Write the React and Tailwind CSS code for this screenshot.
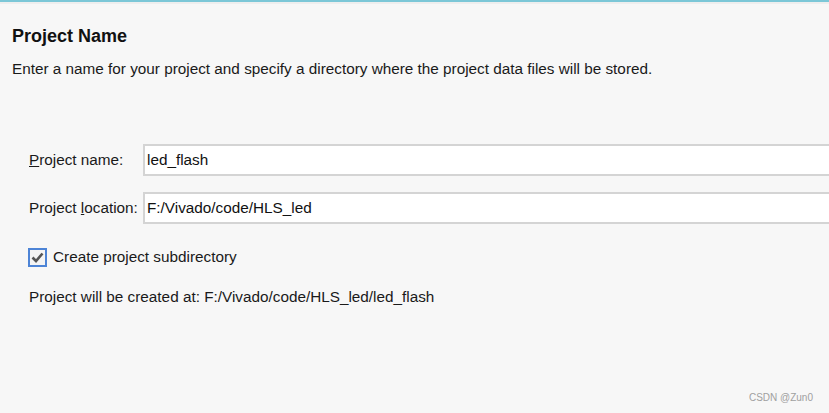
export default function App() {
  return (
    <div className="w-[829px] h-[413px] bg-[#f7f7f7] overflow-hidden relative" style={{ fontFamily: '"Liberation Sans", Arial, sans-serif' }}>
      <div className="h-[2px] bg-[#7cc7d7]" />
      <div className="h-[2px] bg-[#eeeeee]" />
      <div className="pl-[12px]">
        <div className="pt-[21px] text-[18px] font-bold text-[#111] leading-[22px]">Project Name</div>
        <div className="mt-[13px] text-[15.3px] text-[#1a1a1a] leading-[18px]">Enter a name for your project and specify a directory where the project data files will be stored.</div>
      </div>
      <div className="pl-[29px] mt-[66px]">
        <div className="flex items-center h-[32px]">
          <div className="w-[114px] text-[15.3px] text-[#1a1a1a]"><span className="underline">P</span>roject name:</div>
          <div className="flex-1 h-[32px] bg-white border-2 border-r-0 border-[#d4d4d4] flex items-center pl-[2px] text-[15.3px] text-[#111]">led_flash</div>
        </div>
        <div className="flex items-center h-[32px] mt-[16px]">
          <div className="w-[114px] text-[15.3px] text-[#1a1a1a]">Project <span className="underline">l</span>ocation:</div>
          <div className="flex-1 h-[32px] bg-white border-2 border-r-0 border-[#d4d4d4] flex items-center pl-[2px] text-[15.3px] text-[#111]">F:/Vivado/code/HLS_led</div>
        </div>
        <div className="flex items-center mt-[22px] -ml-[1px]">
          <div className="w-[19px] h-[19px] border-2 border-[#4d84d6] bg-[#f4f4f4] flex items-center justify-center">
            <svg width="13" height="11" viewBox="0 0 13 11"><path d="M1.5 5.5 L5 9 L11.5 1.5" fill="none" stroke="#555" strokeWidth="2.6" /></svg>
          </div>
          <span className="ml-[6px] text-[15.3px] text-[#1a1a1a]">Create project subdirectory</span>
        </div>
        <div className="mt-[17px] text-[15.3px] text-[#1a1a1a]">Project will be created at: F:/Vivado/code/HLS_led/led_flash</div>
      </div>
      <div className="absolute right-[16px] bottom-[8px] text-[10px] text-[#a0a0a0]">CSDN @Zun0</div>
    </div>
  );
}
